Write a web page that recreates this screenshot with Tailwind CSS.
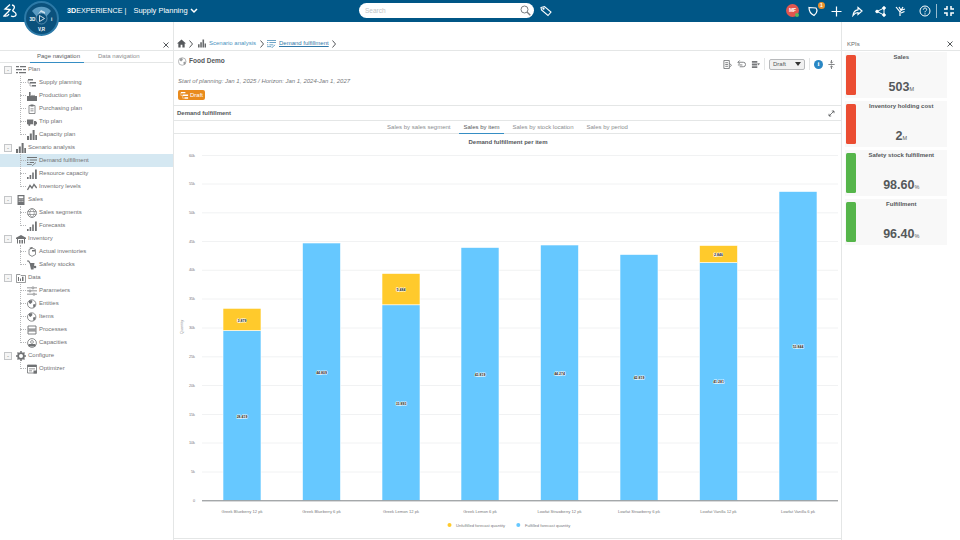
<!DOCTYPE html>
<html lang="en">
<head>
    <meta charset="UTF-8">
    <title>Supply Planning - Demand fulfillment</title>
    <script src="https://cdn.jsdelivr.net/npm/@tailwindcss/browser@4"></script>
</head>
<body class="w-[960px] h-[540px] overflow-hidden bg-white font-['Liberation_Sans',Arial,sans-serif] text-[#5b5d5e]">
    <!-- shared tree icons -->
    <svg class="hidden">
        <symbol id="i-bars" viewBox="0 0 10 10"><path fill="currentColor" d="M0 6h2v4H0zM2.800 3.500h2V10h-2zM5.600 0h2v10h-2zM8.300 5H10v5H8.300z"/></symbol>
        <symbol id="i-signal" viewBox="0 0 10 10"><path fill="currentColor" d="M0 8h1.600v2H0zM2.600 6h1.600v4H2.600zM5.200 3.500h1.600V10H5.200zM8 .5h1.800V10H8z"/></symbol>
        <symbol id="i-plan" viewBox="0 0 10 10"><path fill="currentColor" d="M0 1h3v1.200H0zM4 1h6v1.200H4zM0 4h6v1.200H0zM7 4h3v1.200H7zM0 7h2v1.200H0zM3 7h7v1.200H3z"/></symbol>
        <symbol id="i-gantt" viewBox="0 0 10 10"><path fill="currentColor" d="M1 1h5v1.600H1zM3 4h6v1.600H3zM5 7h4v1.600H5z"/><path fill="none" stroke="currentColor" stroke-width=".5" d="M1 2v3h2M3 5v3h2"/></symbol>
        <symbol id="i-factory" viewBox="0 0 10 10"><path fill="currentColor" d="M0 10V5h2V1h1.600v4l2-1.200V5l2-1.200V5H10v5z"/></symbol>
        <symbol id="i-clip" viewBox="0 0 10 10"><path fill="none" stroke="currentColor" stroke-width=".8" d="M2 1.500h6v8H2z"/><path fill="currentColor" d="M3.500.5h3v2h-3zM3.500 4.500h3v.7h-3zM3.500 6.500h3v.7h-3z"/></symbol>
        <symbol id="i-truck" viewBox="0 0 10 10"><path fill="currentColor" d="M0 2.500h6.300v4.800H0zM7 4h1.800L10 5.600v1.700H7z"/><circle cx="2.300" cy="7.800" r="1.100" fill="currentColor"/><circle cx="7.800" cy="7.800" r="1.100" fill="currentColor"/></symbol>
        <symbol id="i-list" viewBox="0 0 10 10"><path fill="currentColor" d="M0 1h10v.9H0zM0 3.500h1.400v.9H0zM2.600 3.500H10v.9H2.600zM0 6h1.400v.9H0zM2.600 6H7v.9H2.600z"/><path fill="none" stroke="currentColor" stroke-width=".8" d="M0 8.500h4.500l1 1 3.500-3"/></symbol>
        <symbol id="i-wave" viewBox="0 0 10 10"><path fill="none" stroke="currentColor" stroke-width="1.300" d="M.5 8 3 3.500 5 6l2-3.500L9.700 6"/></symbol>
        <symbol id="i-calc" viewBox="0 0 10 10"><path fill="currentColor" d="M1.500 0h7v10h-7z"/><path fill="#fff" d="M2.700 1.200h4.600v2H2.700zM2.700 4.400h1v.8h-1zM4.500 4.400h1v.8h-1zM6.300 4.400h1v.8h-1zM2.700 6.200h1V7h-1zM4.500 6.200h1V7h-1zM6.300 6.200h1V7h-1z"/></symbol>
        <symbol id="i-globe" viewBox="0 0 10 10"><circle cx="5" cy="5" r="4.400" fill="none" stroke="currentColor" stroke-width=".8"/><path fill="none" stroke="currentColor" stroke-width=".6" d="M.6 3.500h8.800M.6 6.500h8.800M5 .6c-3 3-3 5.800 0 8.800M5 .6c3 3 3 5.800 0 8.800"/></symbol>
        <symbol id="i-store" viewBox="0 0 10 10"><path fill="currentColor" d="M0 3.800 5 1l5 2.800V5H9v4.500H8V5H2v4.500H1V5H0z"/><path fill="currentColor" d="M3 6h1.500v3.500H3zM5.500 6H7v3.500H5.500z"/></symbol>
        <symbol id="i-box" viewBox="0 0 10 10"><path fill="none" stroke="currentColor" stroke-width=".8" d="M2 2.500 5 1l3.500 1.500v5L5 9.400 2 7.500z"/><path fill="currentColor" d="M2.500 .8 5 0l1 1-2.500 1.200zM5 3h3v1.500H5z"/></symbol>
        <symbol id="i-bottle" viewBox="0 0 10 10"><path fill="currentColor" d="M0 .5h2L3.500 3h4L6.500 9.500H4L2.700 3.800 1.200 1.500H0z"/><circle cx="8" cy="7" r="1.300" fill="currentColor"/></symbol>
        <symbol id="i-data" viewBox="0 0 10 10"><path fill="none" stroke="currentColor" stroke-width=".7" d="M.5 1.500h3.500l1 1h4.500v7H.5z"/><path fill="currentColor" d="M2 4h1v4H2zM4 5.500h1V8H4zM6 3.800h1.500V8H6z"/></symbol>
        <symbol id="i-sliders" viewBox="0 0 10 10"><path fill="currentColor" d="M0 1.500h5v.7H0zM7 1.500h3v.7H7zM0 4.600h2v.7H0zM4 4.600h6v.7H4zM0 7.800h6v.7H0zM8 7.800h2v.7H8z"/><path fill="none" stroke="currentColor" stroke-width=".6" d="M5.300.9h1.300v2H5.300zM2.300 4h1.300v2H2.300zM6.300 7.200h1.300v2H6.300z"/></symbol>
        <symbol id="i-entity" viewBox="0 0 10 10"><circle cx="4.700" cy="5" r="4.200" fill="none" stroke="currentColor" stroke-width=".8"/><path fill="currentColor" d="M2 1.800 4.500 1 5.500 3 3.500 5 2 4zM6 5.500l2.500-.5L8.300 7.500 6.500 9z"/></symbol>
        <symbol id="i-process" viewBox="0 0 10 10"><path fill="none" stroke="currentColor" stroke-width=".9" d="M1 1h8v3H1zM1 6h8v3H1zM0 5h10"/></symbol>
        <symbol id="i-gauge" viewBox="0 0 10 10"><circle cx="5" cy="5" r="4.400" fill="none" stroke="currentColor" stroke-width=".8"/><path fill="currentColor" d="M1.500 6h7v2.500h-7z"/><circle cx="5" cy="4" r="1.400" fill="none" stroke="currentColor" stroke-width=".7"/></symbol>
        <symbol id="i-gear" viewBox="0 0 10 10"><circle cx="5" cy="5" r="2.900" fill="none" stroke="currentColor" stroke-width="1.800"/><path fill="none" stroke="currentColor" stroke-width="1.500" d="M5 0v1.800M5 8.200V10M0 5h1.800M8.200 5H10M1.500 1.500 2.700 2.700M7.300 7.300l1.200 1.200M8.500 1.500 7.300 2.700M2.700 7.300 1.500 8.500"/></symbol>
        <symbol id="i-opt" viewBox="0 0 10 10"><path fill="none" stroke="currentColor" stroke-width=".8" d="M.5 1h9v8H.5z"/><path fill="currentColor" d="M.5 1h9v2h-9zM2 4.500h6v.7H2zM2 6.500h3v.7H2zM6.500 6.500h3.500v3H6.500z"/></symbol>
    </svg>

    <!-- top bar -->
    <header class="relative z-10 flex h-[22px] items-center bg-[#005686] text-white">
        <svg class="absolute left-[3px] top-[3px] h-[16px] w-[16px]" viewBox="0 0 16 16" fill="none" stroke="#fff" stroke-width="1.300">
            <path d="M7 1.500 2 6l5 .5-1.500 2L1 13c2 .5 4 0 5-2M9 2c3 .5 3 3 1 5-1.500 1.500 4 2 3 5-.5 1.500-3 2-5 1"/>
        </svg>
        <span class="ml-[67px] text-[7.200px]"><b>3D</b>EXPERIENCE |</span>
        <span class="ml-[7px] text-[7.500px]">Supply Planning</span>
        <svg class="ml-[2px] h-[6px] w-[8px]" viewBox="0 0 8 6" fill="none" stroke="#fff" stroke-width="1.500"><path d="m1 1 3 3 3-3"/></svg>
        <div class="absolute left-[359px] top-[3px] flex h-[15px] w-[175px] items-center justify-between rounded-full bg-white pl-[6px] pr-[3px]">
            <span class="text-[6.500px] text-[#c2c4c6]">Search</span>
            <svg class="h-[11px] w-[11px]" viewBox="0 0 11 11" fill="none" stroke="#7c7f82" stroke-width="1"><circle cx="4.500" cy="4.500" r="3.500"/><path d="m7 7 3.300 3.300" stroke-width="1.400"/></svg>
        </div>
        <svg class="absolute left-[540px] top-[5px] h-[12px] w-[12px]" viewBox="0 0 12 12" fill="none" stroke="#fff" stroke-width="1.100"><path d="M1 2.500 4.500 1.500 11 7l-3 3.500L1.500 5z"/><circle cx="3.500" cy="3.700" r=".6"/></svg>

        <div class="absolute left-[786px] top-[4px] flex h-[13px] w-[13px] items-center justify-center rounded-full bg-[#e0564f] text-[5px] font-bold">MF</div>
        <span class="absolute left-[795px] top-[13px] h-[4px] w-[4px] rounded-full bg-[#5cb85c]"></span>
        <svg class="absolute left-[808px] top-[6px] h-[11px] w-[11px]" viewBox="0 0 11 11" fill="none" stroke="#fff" stroke-width="1.200"><path d="M1 1.500 8 2c1.500 2 1 5-2 7.500C3 8 1 5 1 1.500z"/></svg>
        <span class="absolute left-[818px] top-[2px] flex h-[7px] w-[7px] items-center justify-center rounded-full bg-[#e8912d] text-[5px] font-bold">1</span>
        <div class="absolute right-[6px] top-0 flex h-[22px] items-center">
            <svg class="h-[11px] w-[11px]" viewBox="0 0 11 11" stroke="#fff" stroke-width="1.200"><path d="M5.500 .5v10M.5 5.500h10"/></svg>
            <svg class="ml-[10px] h-[11px] w-[11px]" viewBox="0 0 11 11" fill="none" stroke="#fff" stroke-width="1.200"><path d="M6 1.500 10 5 6 8.500V6.500C4 6.500 2.500 7.500 1 9.500c.3-3 2-5.500 5-5.700z"/></svg>
            <svg class="ml-[12px] h-[11px] w-[11px]" viewBox="0 0 11 11" fill="#fff" stroke="#fff" stroke-width="1"><circle cx="2" cy="5.500" r="1.300"/><circle cx="9" cy="2" r="1.300"/><circle cx="9" cy="9" r="1.300"/><path fill="none" d="M9 2 2 5.500 9 9z"/></svg>
            <svg class="ml-[9px] h-[11px] w-[11px]" viewBox="0 0 11 11" fill="none" stroke="#fff" stroke-width="1.200"><path d="m1 1 4 5v4M4 1l2.500 4M8 1 5 6M5.500 4.500 10 3M6 7l3.500-1.500"/></svg>
            <svg class="ml-[13px] h-[12px] w-[12px]" viewBox="0 0 12 12" fill="none" stroke="#fff" stroke-width="1"><circle cx="6" cy="6" r="5"/><path d="M4.300 4.700c0-2.200 3.400-2.200 3.400-.2 0 1.300-1.700 1.300-1.700 2.800M6 8.300v1.200"/></svg>
            <span class="ml-[5px] h-[14px] w-px bg-white/60"></span>
            <svg class="ml-[7px] h-[10px] w-[10px]" viewBox="0 0 10 10" fill="none" stroke="#fff" stroke-width="1.500"><path d="M0 3h3V0M7 0v3h3M0 7h3v3M10 7H7v3"/></svg>
        </div>
    </header>

    <!-- compass -->
    <div class="absolute left-[24px] top-[1px] z-20 flex h-[35px] w-[35px] items-center justify-center rounded-full border-[2px] border-[#2c7aa8] bg-[#0b517c]">
        <svg class="h-[31px] w-[31px]" viewBox="0 0 31 31">
            <path d="M6 8a13 13 0 0 1 19 0l-5 6a6 6 0 0 0-9 0z" fill="#5a9bc2"/>
            <path d="M12 11 15 9l4 2v-2l-4-2z" fill="#fff" opacity=".7"/>
            <circle cx="15.500" cy="15.500" r="5.500" fill="#0b517c" stroke="#9cc3da" stroke-width=".5"/>
            <path d="m13.500 12.500 5 3-5 3z" fill="none" stroke="#fff" stroke-width=".8"/>
            <text x="3.500" y="17.500" font-size="4.500" font-weight="700" fill="#fff">3D</text>
            <text x="25" y="17.500" font-size="4.500" font-weight="700" fill="#fff">i</text>
            <text x="15.500" y="28" font-size="4.500" font-weight="700" fill="#fff" text-anchor="middle">V,R</text>
        </svg>
    </div>

    <div class="flex h-[518px]">
        <!-- left navigation -->
        <aside class="w-[174px] shrink-0 border-r border-[#e4e6e6]">
            <div class="flex h-[29px] items-end justify-end border-b border-[#e4e6e6] pb-[2px] pr-[4px]">
                <svg class="h-[6px] w-[6px]" viewBox="0 0 6 6" stroke="#55585b" stroke-width="1"><path d="m.5.500 5 5M5.500.500l-5 5"/></svg>
            </div>
            <div class="flex h-[12px] border-b border-[#e4e6e6] pl-[30px] text-[6px] leading-[10px]">
                <span class="h-[12px] w-[54px] border-b border-[#368ec4] pl-[7px]">Page navigation</span>
                <span class="ml-[14px] text-[#8b8d8f]">Data navigation</span>
            </div>
            <nav class="text-[6px] text-[#707274]">
                <div class="flex h-[13px] items-center pl-[4px]"><span class="flex h-[8px] w-[8px] items-center justify-center border border-[#c4c6c8] bg-[#f5f5f5] text-[6px] leading-none">-</span><svg class="ml-[4px] h-[10px] w-[10px]"><use href="#i-plan"/></svg><span class="ml-[2px]">Plan</span></div>
                <div class="relative before:absolute before:left-[20px] before:top-0 before:bottom-[6px] before:border-l before:border-dotted before:border-[#b5b7b9]">
                    <div class="flex h-[13px] items-center pl-[20px]"><i class="w-[6px] border-t border-dotted border-[#b5b7b9]"></i><svg class="ml-[1px] h-[10px] w-[10px]"><use href="#i-gantt"/></svg><span class="ml-[2px]">Supply planning</span></div>
                    <div class="flex h-[13px] items-center pl-[20px]"><i class="w-[6px] border-t border-dotted border-[#b5b7b9]"></i><svg class="ml-[1px] h-[10px] w-[10px]"><use href="#i-factory"/></svg><span class="ml-[2px]">Production plan</span></div>
                    <div class="flex h-[13px] items-center pl-[20px]"><i class="w-[6px] border-t border-dotted border-[#b5b7b9]"></i><svg class="ml-[1px] h-[10px] w-[10px]"><use href="#i-clip"/></svg><span class="ml-[2px]">Purchasing plan</span></div>
                    <div class="flex h-[13px] items-center pl-[20px]"><i class="w-[6px] border-t border-dotted border-[#b5b7b9]"></i><svg class="ml-[1px] h-[10px] w-[10px]"><use href="#i-truck"/></svg><span class="ml-[2px]">Trip plan</span></div>
                    <div class="flex h-[13px] items-center pl-[20px]"><i class="w-[6px] border-t border-dotted border-[#b5b7b9]"></i><svg class="ml-[1px] h-[10px] w-[10px]"><use href="#i-bars"/></svg><span class="ml-[2px]">Capacity plan</span></div>
                </div>
                <div class="flex h-[13px] items-center pl-[4px]"><span class="flex h-[8px] w-[8px] items-center justify-center border border-[#c4c6c8] bg-[#f5f5f5] text-[6px] leading-none">-</span><svg class="ml-[4px] h-[10px] w-[10px]"><use href="#i-bars"/></svg><span class="ml-[2px]">Scenario analysis</span></div>
                <div class="relative before:absolute before:left-[20px] before:top-0 before:bottom-[6px] before:border-l before:border-dotted before:border-[#b5b7b9]">
                    <div class="flex h-[13px] items-center bg-[#d5e8f2] pl-[20px]"><i class="w-[6px] border-t border-dotted border-[#b5b7b9]"></i><svg class="ml-[1px] h-[10px] w-[10px]"><use href="#i-list"/></svg><span class="ml-[2px]">Demand fulfillment</span></div>
                    <div class="flex h-[13px] items-center pl-[20px]"><i class="w-[6px] border-t border-dotted border-[#b5b7b9]"></i><svg class="ml-[1px] h-[10px] w-[10px]"><use href="#i-signal"/></svg><span class="ml-[2px]">Resource capacity</span></div>
                    <div class="flex h-[13px] items-center pl-[20px]"><i class="w-[6px] border-t border-dotted border-[#b5b7b9]"></i><svg class="ml-[1px] h-[10px] w-[10px]"><use href="#i-wave"/></svg><span class="ml-[2px]">Inventory levels</span></div>
                </div>
                <div class="flex h-[13px] items-center pl-[4px]"><span class="flex h-[8px] w-[8px] items-center justify-center border border-[#c4c6c8] bg-[#f5f5f5] text-[6px] leading-none">-</span><svg class="ml-[4px] h-[10px] w-[10px]"><use href="#i-calc"/></svg><span class="ml-[2px]">Sales</span></div>
                <div class="relative before:absolute before:left-[20px] before:top-0 before:bottom-[6px] before:border-l before:border-dotted before:border-[#b5b7b9]">
                    <div class="flex h-[13px] items-center pl-[20px]"><i class="w-[6px] border-t border-dotted border-[#b5b7b9]"></i><svg class="ml-[1px] h-[10px] w-[10px]"><use href="#i-globe"/></svg><span class="ml-[2px]">Sales segments</span></div>
                    <div class="flex h-[13px] items-center pl-[20px]"><i class="w-[6px] border-t border-dotted border-[#b5b7b9]"></i><svg class="ml-[1px] h-[10px] w-[10px]"><use href="#i-signal"/></svg><span class="ml-[2px]">Forecasts</span></div>
                </div>
                <div class="flex h-[13px] items-center pl-[4px]"><span class="flex h-[8px] w-[8px] items-center justify-center border border-[#c4c6c8] bg-[#f5f5f5] text-[6px] leading-none">-</span><svg class="ml-[4px] h-[10px] w-[10px]"><use href="#i-store"/></svg><span class="ml-[2px]">Inventory</span></div>
                <div class="relative before:absolute before:left-[20px] before:top-0 before:bottom-[6px] before:border-l before:border-dotted before:border-[#b5b7b9]">
                    <div class="flex h-[13px] items-center pl-[20px]"><i class="w-[6px] border-t border-dotted border-[#b5b7b9]"></i><svg class="ml-[1px] h-[10px] w-[10px]"><use href="#i-box"/></svg><span class="ml-[2px]">Actual inventories</span></div>
                    <div class="flex h-[13px] items-center pl-[20px]"><i class="w-[6px] border-t border-dotted border-[#b5b7b9]"></i><svg class="ml-[1px] h-[10px] w-[10px]"><use href="#i-bottle"/></svg><span class="ml-[2px]">Safety stocks</span></div>
                </div>
                <div class="flex h-[13px] items-center pl-[4px]"><span class="flex h-[8px] w-[8px] items-center justify-center border border-[#c4c6c8] bg-[#f5f5f5] text-[6px] leading-none">-</span><svg class="ml-[4px] h-[10px] w-[10px]"><use href="#i-data"/></svg><span class="ml-[2px]">Data</span></div>
                <div class="relative before:absolute before:left-[20px] before:top-0 before:bottom-[6px] before:border-l before:border-dotted before:border-[#b5b7b9]">
                    <div class="flex h-[13px] items-center pl-[20px]"><i class="w-[6px] border-t border-dotted border-[#b5b7b9]"></i><svg class="ml-[1px] h-[10px] w-[10px]"><use href="#i-sliders"/></svg><span class="ml-[2px]">Parameters</span></div>
                    <div class="flex h-[13px] items-center pl-[20px]"><i class="w-[6px] border-t border-dotted border-[#b5b7b9]"></i><svg class="ml-[1px] h-[10px] w-[10px]"><use href="#i-entity"/></svg><span class="ml-[2px]">Entities</span></div>
                    <div class="flex h-[13px] items-center pl-[20px]"><i class="w-[6px] border-t border-dotted border-[#b5b7b9]"></i><svg class="ml-[1px] h-[10px] w-[10px]"><use href="#i-entity"/></svg><span class="ml-[2px]">Items</span></div>
                    <div class="flex h-[13px] items-center pl-[20px]"><i class="w-[6px] border-t border-dotted border-[#b5b7b9]"></i><svg class="ml-[1px] h-[10px] w-[10px]"><use href="#i-process"/></svg><span class="ml-[2px]">Processes</span></div>
                    <div class="flex h-[13px] items-center pl-[20px]"><i class="w-[6px] border-t border-dotted border-[#b5b7b9]"></i><svg class="ml-[1px] h-[10px] w-[10px]"><use href="#i-gauge"/></svg><span class="ml-[2px]">Capacities</span></div>
                </div>
                <div class="flex h-[13px] items-center pl-[4px]"><span class="flex h-[8px] w-[8px] items-center justify-center border border-[#c4c6c8] bg-[#f5f5f5] text-[6px] leading-none">-</span><svg class="ml-[4px] h-[10px] w-[10px]"><use href="#i-gear"/></svg><span class="ml-[2px]">Configure</span></div>
                <div class="relative before:absolute before:left-[20px] before:top-0 before:bottom-[6px] before:border-l before:border-dotted before:border-[#b5b7b9]">
                    <div class="flex h-[13px] items-center pl-[20px]"><i class="w-[6px] border-t border-dotted border-[#b5b7b9]"></i><svg class="ml-[1px] h-[10px] w-[10px]"><use href="#i-opt"/></svg><span class="ml-[2px]">Optimizer</span></div>
                </div>
            </nav>
        </aside>

        <!-- centre -->
        <main class="flex w-[667px] shrink-0 flex-col">
            <div class="flex h-[28px] items-end pb-[2px] pl-[3px] text-[6px]">
                <svg class="h-[9px] w-[9px] text-[#55585b]" viewBox="0 0 10 10" fill="currentColor"><path d="M5 .5 0 5h1.500v4.500h2.500V6.500h2v3h2.500V5H10z"/></svg>
                <svg class="ml-[3px] h-[8px] w-[4px]" viewBox="0 0 4 8" fill="none" stroke="#55585b"><path d="m.5.500 3 3.500-3 3.500"/></svg>
                <svg class="ml-[5px] h-[9px] w-[8px] text-[#67696b]"><use href="#i-bars"/></svg>
                <span class="ml-[3px] w-[47px] whitespace-nowrap text-[#4a93c0]">Scenario analysis</span>
                <svg class="ml-[4px] h-[8px] w-[4px]" viewBox="0 0 4 8" fill="none" stroke="#55585b"><path d="m.5.500 3 3.500-3 3.500"/></svg>
                <svg class="ml-[3px] h-[9px] w-[9px] text-[#3f86b5]"><use href="#i-list"/></svg>
                <span class="ml-[3px] whitespace-nowrap text-[#2f78a8] underline">Demand fulfillment</span>
                <svg class="ml-[3px] h-[8px] w-[4px]" viewBox="0 0 4 8" fill="none" stroke="#55585b"><path d="m.5.500 3 3.500-3 3.500"/></svg>
            </div>
            <div class="h-[55px] border-t border-[#e4e6e6] px-[4px]">
                <div class="flex h-[20px] items-center justify-between">
                    <div class="flex items-center gap-[2px]">
                        <svg class="h-[9px] w-[9px] text-[#9a9c9e]"><use href="#i-entity"/></svg>
                        <span class="text-[6.500px] font-bold text-[#55585b]">Food Demo</span>
                    </div>
                    <div class="mr-[2px] mt-[6px] flex items-center gap-[4px] text-[#77797c]">
                        <svg class="h-[9px] w-[9px]" viewBox="0 0 10 10" fill="none" stroke="currentColor"><path d="M1 .5h6v9H1zM2.500 3h3M2.500 5h3M2.500 7h3M7 3.500 9.500 6 7 8"/></svg>
                        <svg class="ml-[1px] h-[9px] w-[9px]" viewBox="0 0 10 10" fill="none" stroke="currentColor"><path d="M1 2.500h6a2.500 2.500 0 0 1 0 5H3M1 5.500h5M3 .5 1 2.500l2 2"/></svg>
                        <svg class="ml-[1px] h-[9px] w-[9px]" viewBox="0 0 10 10" fill="currentColor"><path d="M1 1h6v2H1zM1 4h6v2H1zM1 7h6v2H1zM7 3.500h3L8.500 6z"/></svg>
                        <span class="h-[12px] w-px bg-[#e4e6e6]"></span>
                        <div class="flex h-[11px] w-[36px] items-center justify-between rounded-[2px] border border-[#b8babc] bg-[#f1f1f1] px-[3px] text-[6px] text-[#55585b]">Draft<span class="h-0 w-0 border-x-[3px] border-t-[4px] border-x-transparent border-t-[#333]"></span></div>
                        <span class="h-[12px] w-px bg-[#e4e6e6]"></span>
                        <span class="flex h-[9px] w-[9px] items-center justify-center rounded-full bg-[#2a87c4] font-['Liberation_Serif'] text-[7px] font-bold text-white">i</span>
                        <svg class="ml-[1px] h-[9px] w-[7px]" viewBox="0 0 7 10" fill="none" stroke="currentColor"><path d="M0 5h7M3.500 0v3.500M3.500 10V6.500M2 2l1.500 1.500L5 2M2 8l1.500-1.500L5 8"/></svg>
                    </div>
                </div>
                <p class="mt-[6px] text-[6px] italic leading-[8px] text-[#77797c]">Start of planning: Jan 1, 2025 / Horizon: Jan 1, 2024-Jan 1, 2027</p>
                <div class="mt-[5px] flex h-[10px] w-[27px] items-center justify-center gap-[1px] rounded-[2px] bg-[#e98b1d] text-[6px] text-white">
                    <svg class="h-[9px] w-[9px] text-white"><use href="#i-gantt"/></svg>Draft
                </div>
            </div>
            <!-- chart panel -->
            <section class="flex h-[434px] flex-col border-y border-[#e4e6e6]">
                <div class="flex h-[15px] shrink-0 items-center justify-between border-b border-[#e4e6e6] pl-[3px] pr-[6px]">
                    <span class="text-[6px] font-bold text-[#55585b]">Demand fulfillment</span>
                    <svg class="h-[7px] w-[7px]" viewBox="0 0 7 7" fill="none" stroke="#55585b" stroke-width=".8"><path d="M1 6l5-5M3.800 1H6v2.200M1 3.800V6h2.200"/></svg>
                </div>
                <div class="flex h-[13px] shrink-0 justify-center gap-[13px] border-b border-[#e4e6e6] text-[6px] leading-[12px] text-[#8b8d8f]">
                    <span>Sales by sales segment</span>
                    <span class="-mx-[4px] h-[13px] border-b border-[#368ec4] px-[4px] text-[#55585b]">Sales by item</span>
                    <span>Sales by stock location</span>
                    <span>Sales by period</span>
                </div>
                <svg class="block h-[404px] w-[666px] font-['Liberation_Sans',Arial,sans-serif]" viewBox="174 134 666 404">
                    <text x="508" y="144" font-size="6" font-weight="700" fill="#55585b" text-anchor="middle">Demand fulfillment per item</text>
                    <g stroke="#eeeff0" stroke-width=".8">
                        <path d="M202 155.500H838M202 184H838M202 212.800H838M202 241.500H838M202 270.300H838M202 299H838M202 328H838M202 356.800H838M202 385.500H838M202 414.500H838M202 443H838M202 472H838"/>
                    </g>
                    <g font-size="3.800" fill="#77797c" text-anchor="end">
                        <text x="195" y="156.500">60k</text><text x="195" y="185">55k</text><text x="195" y="213.800">50k</text><text x="195" y="242.500">45k</text><text x="195" y="271.300">40k</text><text x="195" y="300">35k</text><text x="195" y="329">30k</text><text x="195" y="357.800">25k</text><text x="195" y="386.500">20k</text><text x="195" y="415.500">15k</text><text x="195" y="444">10k</text><text x="195" y="473">5k</text><text x="195" y="502">0</text>
                    </g>
                    <text font-size="3.800" fill="#85878a" text-anchor="middle" transform="translate(183 327) rotate(-90)">Quantity</text>
                    <g fill="#66c8ff" stroke="#fff" stroke-width=".6">
                        <rect x="223" y="330.500" width="38" height="170"/>
                        <rect x="302.500" y="243" width="38" height="257.500"/>
                        <rect x="382" y="304.800" width="38" height="195.700"/>
                        <rect x="461" y="247.500" width="38" height="253"/>
                        <rect x="540.500" y="245" width="38" height="255.500"/>
                        <rect x="620" y="254.500" width="38" height="246"/>
                        <rect x="699.500" y="262.500" width="38" height="238"/>
                        <rect x="779" y="191.500" width="38" height="309"/>
                    </g>
                    <g fill="#ffca2c" stroke="#fff" stroke-width=".6">
                        <rect x="223" y="308.300" width="38" height="22.200"/>
                        <rect x="382" y="273.500" width="38" height="31.300"/>
                        <rect x="699.500" y="245.500" width="38" height="17"/>
                    </g>
                    <path d="M202 500.800H838" stroke="#7f8487" stroke-width="1"/>
                    <g font-size="3.500" font-weight="700" fill="#222" text-anchor="middle" stroke="#fff" stroke-width="1" paint-order="stroke">
                        <text x="242" y="417.500">28,419</text><text x="242" y="321.500">3,879</text>
                        <text x="321.500" y="373.500">44,809</text>
                        <text x="401" y="404.500">33,893</text><text x="401" y="290.500">5,484</text>
                        <text x="480" y="375.500">43,819</text>
                        <text x="559.500" y="374.500">44,274</text>
                        <text x="639" y="379">42,819</text>
                        <text x="718.500" y="383">41,281</text><text x="718.500" y="255.500">2,846</text>
                        <text x="798" y="347.500">53,844</text>
                    </g>
                    <g font-size="4.100" fill="#77797c" text-anchor="middle">
                        <text x="242" y="512.500">Greek Blueberry 12 pk</text>
                        <text x="321.500" y="512.500">Greek Blueberry 6 pk</text>
                        <text x="401" y="512.500">Greek Lemon 12 pk</text>
                        <text x="480" y="512.500">Greek Lemon 6 pk</text>
                        <text x="559.500" y="512.500">Lowfat Strawberry 12 pk</text>
                        <text x="639" y="512.500">Lowfat Strawberry 6 pk</text>
                        <text x="718.500" y="512.500">Lowfat Vanilla 12 pk</text>
                        <text x="798" y="512.500">Lowfat Vanilla 6 pk</text>
                    </g>
                    <circle cx="449.500" cy="525" r="2" fill="#ffca2c"/>
                    <text x="456" y="526.500" font-size="4.100" fill="#77797c">Unfulfilled forecast quantity</text>
                    <circle cx="518.300" cy="525" r="2" fill="#66c8ff"/>
                    <text x="525" y="526.500" font-size="4.100" fill="#77797c">Fulfilled forecast quantity</text>
                </svg>
            </section>
        </main>

        <!-- KPI panel -->
        <aside class="w-[119px] shrink-0 border-l border-[#e4e6e6]">
            <div class="flex h-[28px] items-end justify-between pb-[2px] pl-[5px] pr-[7px] text-[6px] text-[#67696b]">
                <span class="leading-[8px]">KPIs</span>
                <svg class="mb-px h-[6px] w-[6px]" viewBox="0 0 6 6" stroke="#55585b" stroke-width="1"><path d="m.5.500 5 5M5.500.500l-5 5"/></svg>
            </div>
            <div class="flex flex-col gap-[3px] border-t border-[#e4e6e6] pl-[3px] pt-[1px]">
                <div class="flex h-[46px] w-[102px] items-start bg-[#f8f8f8] py-[3px] pl-[0.5px]">
                    <span class="h-[40px] w-[10px] shrink-0 rounded-[1.500px] bg-[#eb4d32]"></span>
                    <div class="flex h-full flex-1 flex-col items-center justify-between text-[#55585b]">
                        <span class="-mt-[1px] text-[6px] font-bold leading-[7px]">Sales</span>
                        <span class="mb-[-1px] text-[12.500px] font-bold leading-[14px]">503<span class="text-[5.500px] font-normal">M</span></span>
                    </div>
                </div>
                <div class="flex h-[46px] w-[102px] items-start bg-[#f8f8f8] py-[3px] pl-[0.5px]">
                    <span class="h-[40px] w-[10px] shrink-0 rounded-[1.500px] bg-[#eb4d32]"></span>
                    <div class="flex h-full flex-1 flex-col items-center justify-between text-[#55585b]">
                        <span class="-mt-[1px] text-[6px] font-bold leading-[7px]">Inventory holding cost</span>
                        <span class="mb-[-1px] text-[12.500px] font-bold leading-[14px]">2<span class="text-[5.500px] font-normal">M</span></span>
                    </div>
                </div>
                <div class="flex h-[46px] w-[102px] items-start bg-[#f8f8f8] py-[3px] pl-[0.5px]">
                    <span class="h-[40px] w-[10px] shrink-0 rounded-[1.500px] bg-[#55b54a]"></span>
                    <div class="flex h-full flex-1 flex-col items-center justify-between text-[#55585b]">
                        <span class="-mt-[1px] text-[6px] font-bold leading-[7px]">Safety stock fulfillment</span>
                        <span class="mb-[-1px] text-[12.500px] font-bold leading-[14px]">98.60<span class="text-[5.500px] font-normal">%</span></span>
                    </div>
                </div>
                <div class="flex h-[46px] w-[102px] items-start bg-[#f8f8f8] py-[3px] pl-[0.5px]">
                    <span class="h-[40px] w-[10px] shrink-0 rounded-[1.500px] bg-[#55b54a]"></span>
                    <div class="flex h-full flex-1 flex-col items-center justify-between text-[#55585b]">
                        <span class="-mt-[1px] text-[6px] font-bold leading-[7px]">Fulfillment</span>
                        <span class="mb-[-1px] text-[12.500px] font-bold leading-[14px]">96.40<span class="text-[5.500px] font-normal">%</span></span>
                    </div>
                </div>
            </div>
        </aside>
    </div>
</body>
</html>
